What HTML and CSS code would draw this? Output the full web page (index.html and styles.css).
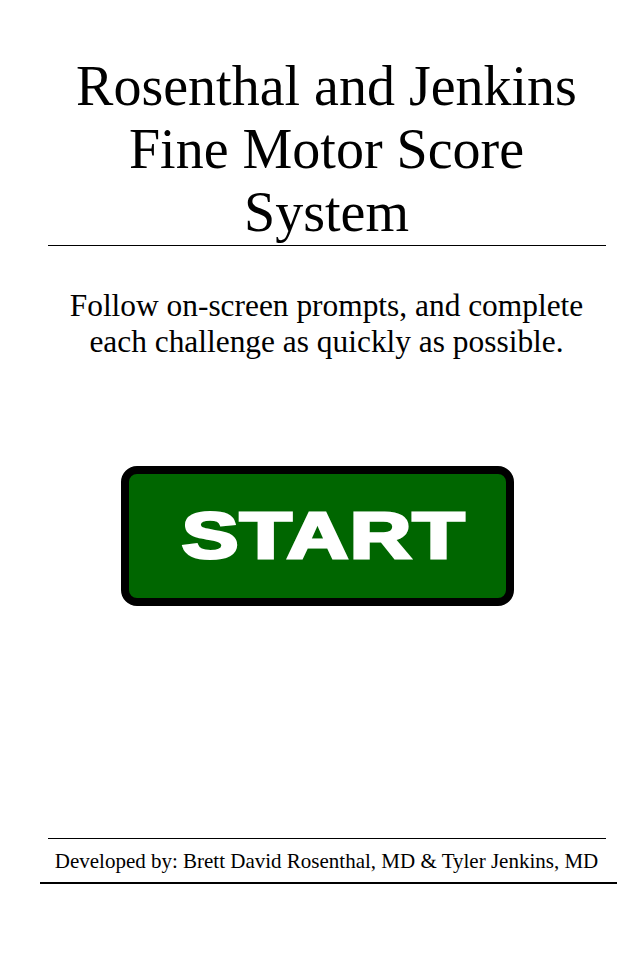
FILE: index.html
```html
<!DOCTYPE html>
<html>
<head>
<meta charset="utf-8">
<link rel="stylesheet" href="styles.css">
</head>
<body>
<main class="page">
  <header class="title-block">
    <h1 class="title">Rosenthal and Jenkins<br>Fine Motor Score<br>System</h1>
  </header>
  <p class="intro">Follow on-screen prompts, and complete<br>each challenge as quickly as possible.</p>
  <div class="start-wrap">
    <button class="start-btn"><span class="start-label">START</span></button>
  </div>
  <footer class="footer">
    <p class="credits">Developed by: Brett David Rosenthal, MD &amp; Tyler Jenkins, MD</p>
  </footer>
</main>
</body>
</html>
```
FILE: styles.css
```css
html, body {
  margin: 0;
  padding: 0;
  background: #ffffff;
}
body {
  font-family: "Liberation Serif", "Times New Roman", serif;
  color: #000;
}
.page {
  width: 640px;
  height: 960px;
  box-sizing: border-box;
  padding-left: 13px;
  display: flex;
  flex-direction: column;
  align-items: center;
}
.title-block {
  width: 558px;
  margin-top: 55px;
  border-bottom: 1px solid #000;
  padding-bottom: 1px;
}
.title {
  margin: 0;
  font-weight: normal;
  font-size: 56px;
  line-height: 63px;
  text-align: center;
}
.intro {
  margin: 42px 0 0 0;
  font-size: 31.4px;
  line-height: 36px;
  text-align: center;
}
.start-wrap {
  margin-top: 106px;
  margin-right: 18px;
  display: flex;
  justify-content: center;
}
.start-btn {
  width: 393px;
  height: 140px;
  box-sizing: border-box;
  border: 8px solid #000;
  border-radius: 16px;
  background: #006600;
  display: flex;
  align-items: center;
  justify-content: center;
  padding: 0 0 0 12px;
  cursor: pointer;
}
.start-label {
  font-family: "Liberation Sans", Arial, sans-serif;
  font-weight: bold;
  font-size: 64px;
  color: #fff;
  -webkit-text-stroke: 3px #fff;
  display: inline-block;
  transform: scaleX(1.33);
  letter-spacing: 1px;
}
.footer {
  margin-top: auto;
  margin-bottom: 76px;
  margin-left: 4px;
  width: 577px;
  display: flex;
  flex-direction: column;
  align-items: center;
  border-bottom: 2px solid #000;
}
.credits {
  width: 558px;
  margin: 0 0 0 -4px;
  border-top: 1px solid #000;
  padding: 11px 0 10px;
  font-size: 21px;
  line-height: 22px;
  text-align: center;
}
```
